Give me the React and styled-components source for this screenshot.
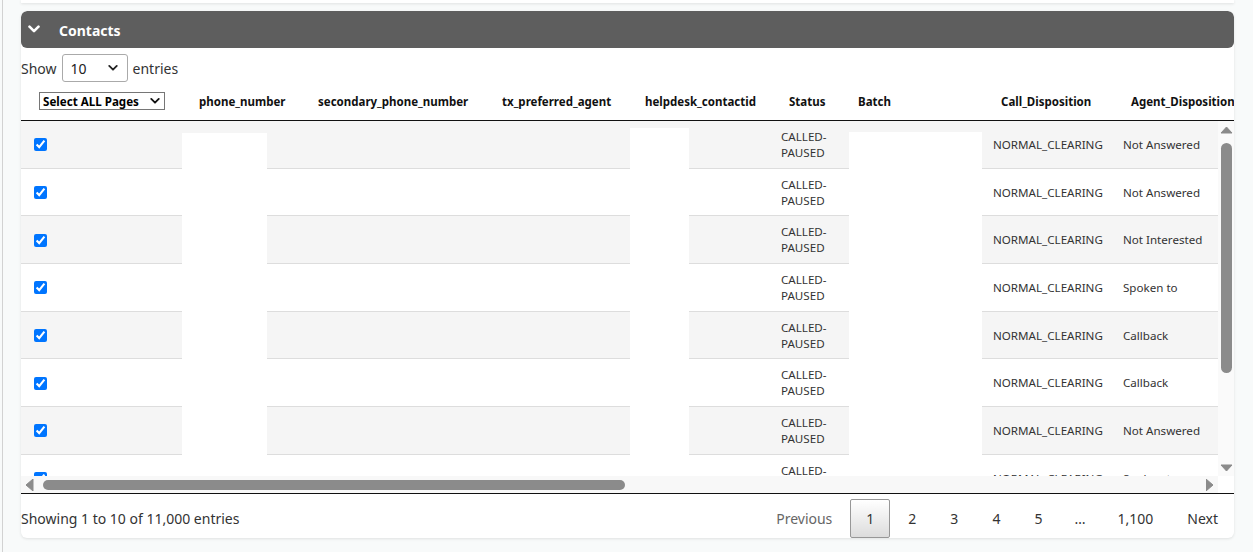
import React from 'react'
import styled, { createGlobalStyle } from 'styled-components'

const GlobalStyle = createGlobalStyle`
  html, body {
    margin: 0;
    padding: 0;
  }
  body {
    background: #f8fafa;
    font-family: 'Noto Sans', 'Open Sans', sans-serif;
    color: #333;
  }
`

const ROW_H = 47.7

const columns = [
  { key: 'sel', width: 160 },
  { key: 'phone', title: 'phone_number', width: 119, redact: { left: 1, width: 85, top: 12 } },
  { key: 'secondary', title: 'secondary_phone_number', width: 184 },
  { key: 'tx', title: 'tx_preferred_agent', width: 143 },
  { key: 'helpdesk', title: 'helpdesk_contactid', width: 144, redact: { left: 3, width: 59, top: 7 } },
  { key: 'status', title: 'Status', width: 69 },
  { key: 'batch', title: 'Batch', width: 143, redact: { left: 9, width: 133, top: 11 } },
  { key: 'call', title: 'Call_Disposition', width: 130 },
  { key: 'agent', title: 'Agent_Disposition', width: 140 },
]

const tableWidth = columns.reduce((sum, c) => sum + c.width, 0)

const rows = [
  'Not Answered',
  'Not Answered',
  'Not Interested',
  'Spoken to',
  'Callback',
  'Callback',
  'Not Answered',
  'Spoken to',
]

const ChevronDown = ({ size = 12, color = '#fff', weight = 2.6 }) => (
  <svg width={size} height={size * 0.7} viewBox="0 0 12 8">
    <polyline points="1.5,1.5 6,6 10.5,1.5" fill="none" stroke={color} strokeWidth={weight} strokeLinecap="round" strokeLinejoin="round" />
  </svg>
)

const Arrow = ({ dir }) => {
  const shapes = {
    up: '1,7 6.5,1 12,7',
    down: '1,1 6.5,7 12,1',
    left: '8,0 8,12 1,6',
    right: '0,0 0,12 7,6',
  }
  const vertical = dir === 'up' || dir === 'down'
  return (
    <svg width={vertical ? 13 : 9} height={vertical ? 8 : 12} viewBox={vertical ? '0 0 13 8' : '0 0 9 12'}>
      <polygon points={shapes[dir]} fill="#8b8b8b" strokeLinejoin="round" stroke="#8b8b8b" strokeWidth="1" />
    </svg>
  )
}

const App = () => {
  return (
    <>
      <GlobalStyle />
      <Page>
        <PrevCardEdge />
        <Card>
          <PanelHeader>
            <ChevronDown />
            <PanelTitle>Contacts</PanelTitle>
          </PanelHeader>

          <LengthBar>
            Show
            <SelectWrap $width={66} $height={28}>
              <LengthSelect defaultValue="10">
                <option>10</option>
                <option>25</option>
                <option>50</option>
                <option>100</option>
              </LengthSelect>
              <SelectIcon $right={10}>
                <ChevronDown size={10} color="#222" weight={2.2} />
              </SelectIcon>
            </SelectWrap>
            entries
          </LengthBar>

          <HeadScroll>
            <Table style={{ width: tableWidth }}>
              <colgroup>
                {columns.map((c) => (
                  <col key={c.key} style={{ width: c.width }} />
                ))}
              </colgroup>
              <thead>
                <tr>
                  {columns.map((c) => (
                    <HeadCell key={c.key}>
                      {c.key === 'sel' ? (
                        <SelectWrap $width={126} $height={18}>
                          <PagesSelect defaultValue="all">
                            <option value="all">Select ALL Pages</option>
                            <option value="page">Select This Page</option>
                          </PagesSelect>
                          <SelectIcon $right={5}>
                            <ChevronDown size={10} color="#111" weight={2.2} />
                          </SelectIcon>
                        </SelectWrap>
                      ) : (
                        c.title
                      )}
                    </HeadCell>
                  ))}
                </tr>
              </thead>
            </Table>
          </HeadScroll>

          <ScrollFrame>
            <BodyViewport>
              <Table style={{ width: tableWidth }}>
                <colgroup>
                  {columns.map((c) => (
                    <col key={c.key} style={{ width: c.width }} />
                  ))}
                </colgroup>
                <tbody>
                  {rows.map((agent, i) => (
                    <tr key={i}>
                      {columns.map((c) => {
                        if (c.redact) {
                          const top = i === 0 ? c.redact.top : 0
                          return (
                            <Cell key={c.key} $odd={i % 2 === 0} $flush>
                              <Redacted $left={c.redact.left} $width={c.redact.width} $top={top} $height={ROW_H - top} />
                            </Cell>
                          )
                        }
                        let content = null
                        if (c.key === 'sel') content = <RowCheck type="checkbox" defaultChecked />
                        if (c.key === 'status') content = 'CALLED-PAUSED'
                        if (c.key === 'call') content = 'NORMAL_CLEARING'
                        if (c.key === 'agent') content = agent
                        return (
                          <Cell key={c.key} $odd={i % 2 === 0} $wrap={c.key === 'status'}>
                            {content}
                          </Cell>
                        )
                      })}
                    </tr>
                  ))}
                </tbody>
              </Table>
            </BodyViewport>

            <VScroll>
              <ScrollButton>
                <Arrow dir="up" />
              </ScrollButton>
              <VTrack>
                <VThumb />
              </VTrack>
              <ScrollButton>
                <Arrow dir="down" />
              </ScrollButton>
            </VScroll>

            <HScroll>
              <ScrollButton>
                <Arrow dir="left" />
              </ScrollButton>
              <HTrack>
                <HThumb />
              </HTrack>
              <ScrollButton>
                <Arrow dir="right" />
              </ScrollButton>
            </HScroll>
            <ScrollCorner />
          </ScrollFrame>

          <Footer>
            <Info>Showing 1 to 10 of 11,000 entries</Info>
            <Paging>
              <PageButton $disabled>Previous</PageButton>
              <PageButton $current>1</PageButton>
              <PageButton>2</PageButton>
              <PageButton>3</PageButton>
              <PageButton>4</PageButton>
              <PageButton>5</PageButton>
              <Ellipsis>…</Ellipsis>
              <PageButton>1,100</PageButton>
              <PageButton>Next</PageButton>
            </Paging>
          </Footer>
        </Card>
      </Page>
    </>
  )
}

export default App

const Page = styled.div`
  min-height: 552px;
  box-sizing: border-box;
  margin-left: 2px;
  border-left: 1px solid #d2d2d2;
  padding: 0 19px 0 18px;
`

const PrevCardEdge = styled.div`
  height: 3px;
  background: #fff;
  box-shadow: 0 1px 3px rgba(0, 0, 0, 0.1);
  margin-bottom: 8px;
`

const Card = styled.div`
  background: #fff;
  border-radius: 6px;
  box-shadow: 0 1px 3px rgba(0, 0, 0, 0.1);
  overflow: hidden;
`

const PanelHeader = styled.div`
  display: flex;
  align-items: center;
  gap: 19px;
  height: 37px;
  padding: 0 0 0 7px;
  box-sizing: border-box;
  background: #5e5e5e;
  border-radius: 6px;
`

const PanelTitle = styled.span`
  color: #fff;
  font-weight: 700;
  font-size: 14px;
  padding-top: 1px;
`

const LengthBar = styled.div`
  display: flex;
  align-items: center;
  gap: 5px;
  margin-top: 6px;
  height: 28px;
  font-size: 14px;
  color: #333;
`

const SelectWrap = styled.div`
  position: relative;
  width: ${(p) => p.$width}px;
  height: ${(p) => p.$height}px;
`

const SelectIcon = styled.span`
  position: absolute;
  right: ${(p) => p.$right}px;
  top: 50%;
  transform: translateY(-50%);
  display: flex;
  pointer-events: none;
`

const LengthSelect = styled.select`
  appearance: none;
  width: 100%;
  height: 100%;
  box-sizing: border-box;
  border: 1px solid #aaa;
  border-radius: 3px;
  background: #fff;
  padding: 0 0 0 8px;
  font-family: inherit;
  font-size: 14px;
  color: #222;
`

const PagesSelect = styled.select`
  appearance: none;
  width: 100%;
  height: 100%;
  box-sizing: border-box;
  border: 1px solid #767676;
  border-radius: 0;
  background: #fff;
  padding: 0 0 0 3px;
  font-family: inherit;
  font-size: 11.6px;
  font-weight: 700;
  color: #000;
`

const HeadScroll = styled.div`
  overflow: hidden;
  margin-top: 6px;
  border-bottom: 1px solid #111;
`

const Table = styled.table`
  table-layout: fixed;
  border-collapse: separate;
  border-spacing: 0;
`

const HeadCell = styled.th`
  height: 26px;
  padding: 0 18px 6px;
  text-align: left;
  font-size: 11.5px;
  font-weight: 700;
  color: #111;
  white-space: nowrap;
`

const ScrollFrame = styled.div`
  display: grid;
  grid-template-columns: 1fr 16px;
  grid-template-rows: 355px 17px;
  border-bottom: 1px solid #111;
`

const BodyViewport = styled.div`
  overflow: hidden;
`

const Cell = styled.td`
  height: ${ROW_H}px;
  padding: ${(p) => (p.$flush ? '0' : '0 10px')};
  vertical-align: ${(p) => (p.$flush ? 'top' : 'middle')};
  background: ${(p) => (p.$odd ? '#f5f5f5' : '#fff')};
  box-shadow: inset 0 -1px 0 #dddddd;
  font-size: 11.6px;
  line-height: 16px;
  color: #333;
  white-space: ${(p) => (p.$wrap ? 'normal' : 'nowrap')};
  word-spacing: ${(p) => (p.$wrap ? '100px' : 'normal')};
  overflow: hidden;
`

const Redacted = styled.div`
  margin: ${(p) => p.$top}px 0 0 ${(p) => p.$left}px;
  width: ${(p) => p.$width}px;
  height: ${(p) => p.$height}px;
  background: #fff;
`

const RowCheck = styled.input`
  margin: 3px 3px 3px 3px;
  vertical-align: middle;
`

const VScroll = styled.div`
  display: flex;
  flex-direction: column;
  background: #fafafa;
`

const HScroll = styled.div`
  display: flex;
  background: #f8f8f8;
`

const ScrollButton = styled.div`
  flex: none;
  display: flex;
  align-items: center;
  justify-content: center;
  width: 16px;
  height: 17px;
`

const VTrack = styled.div`
  flex: 1;
  display: flex;
  justify-content: center;
  padding-top: 5px;
`

const VThumb = styled.div`
  width: 11px;
  height: 230px;
  border-radius: 6px;
  background: #8b8b8b;
`

const HTrack = styled.div`
  flex: 1;
  display: flex;
  align-items: center;
  padding-left: 6px;
`

const HThumb = styled.div`
  width: 582px;
  height: 10px;
  border-radius: 5px;
  background: #8b8b8b;
`

const ScrollCorner = styled.div`
  background: #fff;
`

const Footer = styled.div`
  display: flex;
  justify-content: space-between;
  align-items: flex-end;
  height: 44px;
  font-size: 14px;
  color: #333;
`

const Info = styled.div`
  align-self: center;
  padding-top: 4px;
`

const Paging = styled.div`
  display: flex;
  align-items: flex-end;
`

const PageButton = styled.span`
  display: flex;
  align-items: center;
  box-sizing: border-box;
  height: 39px;
  padding: 0 15px;
  margin-left: 2px;
  border: 1px solid ${(p) => (p.$current ? '#979797' : 'transparent')};
  border-radius: 2px;
  background: ${(p) => (p.$current ? 'linear-gradient(to bottom, #fff 0%, #dcdcdc 100%)' : 'transparent')};
  color: ${(p) => (p.$disabled ? '#666' : '#333')};
  cursor: ${(p) => (p.$disabled ? 'default' : 'pointer')};
`

const Ellipsis = styled.span`
  display: flex;
  align-items: center;
  height: 39px;
  padding: 0 14px;
  margin-left: 2px;
`
